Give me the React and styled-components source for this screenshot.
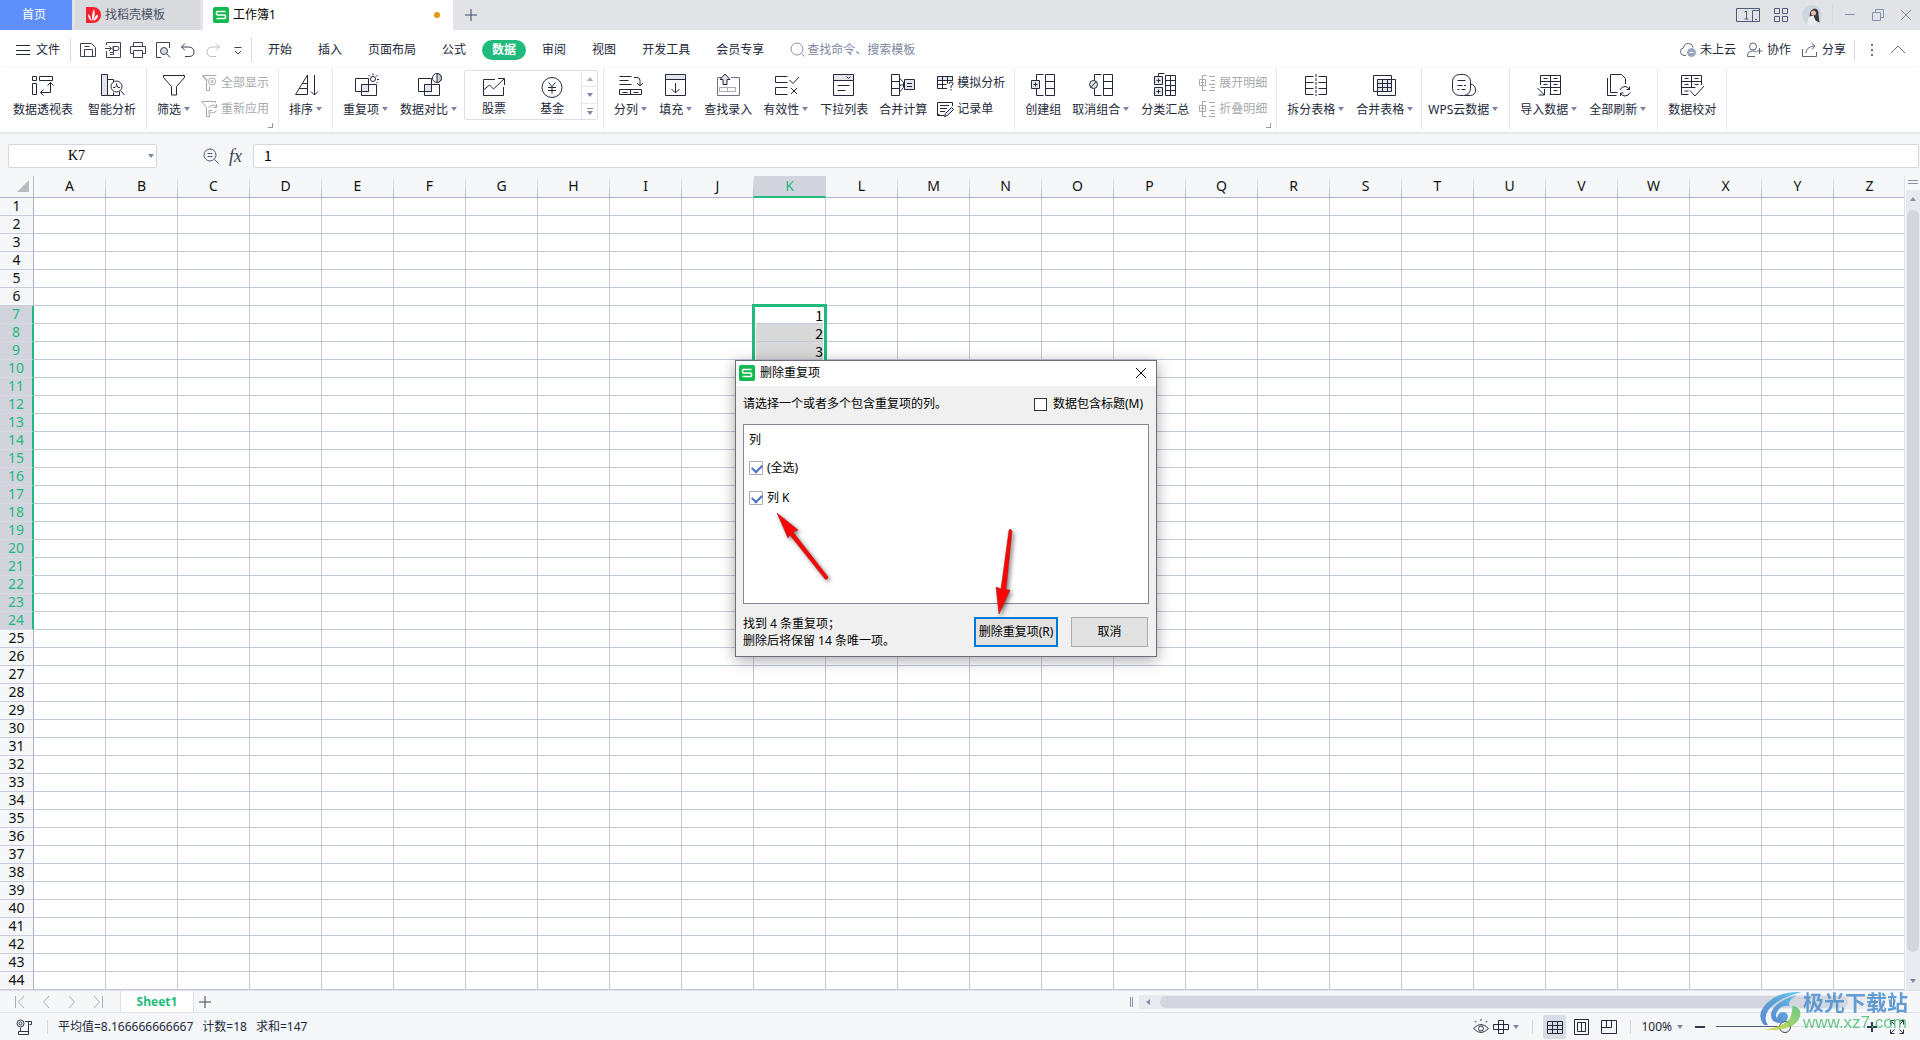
import React from "react";
import styled, { createGlobalStyle } from "styled-components";

const columns = "ABCDEFGHIJKLMNOPQRSTUVWXYZ".split("");
const rows = Array.from({ length: 44 }, (_, i) => i + 1);
const cells = { K7: 1, K8: 2, K9: 3 };
const selection = { column: "K", from: 7, to: 24 };

const menus = ["开始", "插入", "页面布局", "公式", "数据", "审阅", "视图", "开发工具", "会员专享"];

// ribbon groups, left to right
const ribbon = [
    {
        left: 7, right: 5, gap: 4,
        items: [
            { icon: "pivot", label: "数据透视表" },
            { icon: "smart", label: "智能分析" },
        ],
    },
    {
        corner: true,
        items: [
            { icon: "filter", label: "筛选", caret: true },
            {
                stack: [
                    { icon: "showAll", label: "全部显示", disabled: true },
                    { icon: "reapply", label: "重新应用", disabled: true },
                ],
            },
        ],
    },
    { items: [{ icon: "sort", label: "排序", caret: true }] },
    {
        items: [
            { icon: "duplicate", label: "重复项", caret: true },
            { icon: "compare", label: "数据对比", caret: true },
            { gallery: [{ icon: "stock", label: "股票" }, { icon: "fund", label: "基金" }] },
        ],
    },
    {
        items: [
            { icon: "split", label: "分列", caret: true },
            { icon: "fill", label: "填充", caret: true },
            { icon: "lookup", label: "查找录入" },
            { icon: "validity", label: "有效性", caret: true },
            { icon: "dropdown", label: "下拉列表" },
            { icon: "consolidate", label: "合并计算" },
            {
                stack: [
                    { icon: "whatIf", label: "模拟分析" },
                    { icon: "form", label: "记录单" },
                ],
            },
        ],
    },
    {
        corner: true,
        items: [
            { icon: "group", label: "创建组" },
            { icon: "ungroup", label: "取消组合", caret: true },
            { icon: "subtotal", label: "分类汇总" },
            {
                stack: [
                    { icon: "expand", label: "展开明细", disabled: true },
                    { icon: "collapse", label: "折叠明细", disabled: true },
                ],
            },
        ],
    },
    {
        right: 2,
        items: [
            { icon: "splitTable", label: "拆分表格", caret: true },
            { icon: "mergeTable", label: "合并表格", caret: true },
        ],
    },
    { left: 0, right: 5, items: [{ icon: "cloudData", label: "WPS云数据", caret: true }] },
    {
        right: 5,
        items: [
            { icon: "importData", label: "导入数据", caret: true },
            { icon: "refresh", label: "全部刷新", caret: true },
        ],
    },
    { right: 5, items: [{ icon: "proof", label: "数据校对" }] },
];

// 24px drawings
const bigIcons = {
    pivot: <><path d="M1.5 3.5h4v4h-4zM8.5 3.5h13v4h-13zM1.5 10.5h4v11h-4z" /><path d="M19.5 9.5v10h-10M16.5 12.5l3-3 3 3M12.5 16.5l-3 3 3 3" /></>,
    smart: <><path d="M1.5 1.5h6v21h-6z" fill="#e3e5ea" /><path d="M7.5 6.5h6v3M7.5 22.5h12v-4M13.5 22.5v-3" /><circle cx="16.5" cy="13.5" r="5.5" fill="#fff" /><path d="M20.5 17.5l4 4.5M13 14.5h2l2-2 1 2h2M16.5 10.5v2" /></>,
    filter: <path d="M1.5 2.5h21v2l-8 9v8.5h-5v-8.5l-8-9z" />,
    sort: <path d="M13.5 21.5V2l-12 19.5zM5.5 15.5h8M8.5 10.5h5M20.5 2v20M17 18.5l3.5 3.5 3.5-3.5" />,
    duplicate: <><path d="M1.5 5.5h13v13h-13z" /><path d="M7.5 11.5h15v11h-15z" /><path d="M7.5 11.5h7v7h-7z" fill="#e3e5ea" /><circle cx="19" cy="6" r="2.5" /><path d="M19 .5v2M14.5 2l1.5 1.5M23.500 2L22 3.500M25 6.500h-2M22.500 9l1 1" /></>,
    compare: <><path d="M1.5 5.5h13v13h-13z" /><path d="M7.5 11.5h15v11h-15z" /><path d="M7.5 11.5h7v7h-7z" fill="#e3e5ea" /><circle cx="20" cy="5" r="4.5" fill="#fff" /><path d="M20 .5a4.5 4.5 0 010 9z" fill="#c9ccd4" /></>,
    stock: <path d="M13 4.5H1.5v16h20V12M1.5 15l6-5 4 4 10.5-10M16 3.500h6.500V10" />,
    fund: <><circle cx="12" cy="12.5" r="10" /><path d="M8.5 7.5l3.5 4 3.5-4M12 11.500v7M8 12.500h8M8 15.500h8" /></>,
    split: <><path d="M.5 3.5h12M.5 7.5h9M.5 11.5h12M15 4.5h3q3 0 3 3v5M18 10l3 3 3-3" /><path d="M.5 16.5h22v5h-22zM11.5 16.5v5M3.5 19.5h5M14.5 19.5h5" /></>,
    fill: <><path d="M1.5 1.5h20v5h-20z" fill="#e3e5ea" /><path d="M1.5 6.5h20v16h-20zM11.5 10v9.5M7.5 16l4 4 4-4" /></>,
    lookup: <><path d="M6 4.5H1.5v18h22v-18H15" stroke="#6d7180" /><path d="M3.5 14.5h16v4h-16zM11.5 14.5v4" stroke="#a8abb5" /><path d="M9 1l5 5.5h-3v5H7v-5H4z" fill="#e3e5ea" /></>,
    validity: <path d="M13.5 3.5h-12v6h12M13.5 14.5h-12v7h12M15.5 7l3.5 3.5 6-6.5M17 15l6 6M23 15l-6 6" />,
    dropdown: <><path d="M1.5 1.5h20v6h-20z" fill="#e3e5ea" /><path d="M1.5 7.5h20v15h-20zM14.5 3.5l2 2 2-2M5.5 12.5h12M5.5 17.5h8" /></>,
    consolidate: <><path d="M.5 1.5h8v21h-8zM.5 8.5h8M.5 15.5h8M8.5 5l4 4.5v5l-4 4.5M9 12h4" /><path d="M13.5 6.5h10v10h-10z" fill="#e3e5ea" /><path d="M16 10.5h5M16 13.5h5" /></>,
    group: <><path d="M12.5 1.5h-7v21h7" /><path d="M.5 7.5h8v8h-8z" fill="#e3e5ea" /><path d="M4.5 9.5v4M2.5 11.5h4M14.5 1.5h9v21h-9zM14.5 8.5h9M14.5 15.5h9" /></>,
    ungroup: <><path d="M12.5 1.5h-7v21h7" /><circle cx="4.5" cy="11.5" r="4" fill="#e3e5ea" /><path d="M2 14.5l5-6M14.5 1.5h9v21h-9zM14.5 8.5h9M14.5 15.5h9" /></>,
    subtotal: <><path d="M5.5 3V.5h6M12.5 2.5h10v20h-10zM17.5 2.5v20M12.5 7.5h10M12.5 12.5h10M12.5 17.5h10" /><path d="M1.5 3.5h8v8h-8zM1.5 14.5h8v8h-8z" fill="#e3e5ea" /><path d="M5.5 5.5v4M3.5 7.5h4M5.5 16.5v4M3.5 18.5h4" /></>,
    splitTable: <><path d="M9.5 3.5h-8v18h8M1.5 9.5h8M1.5 15.5h8M14.5 3.5h8v18h-8M14.5 9.5h8M14.5 15.5h8" /><path d="M12 1v22" strokeDasharray="3 1" /></>,
    mergeTable: <><path d="M5 18.5H.5v-16h18V6" /><path d="M4.5 6.5h18v16h-18z" /><path d="M4.5 6.5h14v12h-14z" fill="#e3e5ea" /><path d="M4.5 10.5h14M4.5 14.5h14M9.5 6.5v12M14.5 6.5v12" /></>,
    cloudData: <><rect x=".5" y="1.5" width="18" height="21" rx="7" /><path d="M18.5 11q5 1 5 6 0 5-5 5.5h-6M5.5 7.5h8M5.5 12.5h5M12 12.5h2M5.5 16.5h2M9.5 16.5h4" /></>,
    importData: <path d="M3.5 12V2.5h20v19h-11M3.5 8.5h20M3.5 14.5h20M13.5 2.5v19M6.5 5.5h4M16.5 5.5h4M6.5 11.5h4M16.5 11.5h4M16.5 17.5h4M.5 15l7 7M7.5 16v6h-6" />,
    refresh: <><path d="M4.5 1.5h11l4 4V11M4.5 1.5v18h7" /><path d="M1.5 5v17.5h9M14 17q1.5-3.5 5-3.5 3 0 4.5 3M23.5 13.5v3h-3M24 19.5q-1.5 3.5-5 3.5-3 0-4.5-3M14.5 23v-3h3" /></>,
    proof: <path d="M8.5 21.5h-7v-19h20V12M1.5 8.5h20M1.5 14.5h14M11.5 2.5v12M4.5 5.5h4M14.5 5.5h4M4.5 11.5h4M14.5 11.5h4M4.5 18h4M10 17.5l5 5.5 9-10" />,
};

// 16px drawings
const smallIcons = {
    showAll: <><path d="M7 5.5L1.5.5h14M5.5 6v9.5h3V11" /><path d="M1.5 1l4 5" /><circle cx="11" cy="6.5" r="3.5" /><circle cx="11" cy="6.5" r="1" /></>,
    reapply: <><path d="M14.5 2V.5H.5l5 6v9h3V13" /><path d="M8 7q1-3 4-3 2 0 3.5 2M15.5 3v3.5h-3M15.5 9q-1 3-4 3-2 0-3-1.5M8 13V9.5h3" /></>,
    whatIf: <><path d="M.5 1.5h15v4H.5z" fill="#e3e5ea" /><path d="M10 13.5H.5v-12h15V6M.5 5.5h15M.5 9.5h9M5.5 1.5v12M10.5 1.5v7M12 9q0-2 2-2t2 2q0 1-2 2v2M14 14v1.5" /></>,
    form: <><path d="M15.5 5V1.5H.5v13h7M3 4.5h9M3 7.5h7M3 10.5h5M.5 13.5h2" /><path d="M14.5 6.5l2 2-6 6-3 1 1-3z" fill="#e3e5ea" /></>,
    expand: <path d="M7.5.5h-4v15h4M.5 4.5h6v6h-6zM3.5 6v3M2 7.5h3M10 1.5h6M12 5.5h4M10 9.5h6M12 12.5h4M10 15.5h6" />,
    collapse: <path d="M7.5.5h-4v15h4M.5 4.5h6v6h-6zM2 7.5h3M10 1.5h6M12 5.5h4M10 9.5h6M12 12.5h4M10 15.5h6" />,
    save: <path d="M.5 1.5h11l4 4v9H.5zM4.500 14.500v-7h8v7M4.500 4.500h5" />,
    pdf: <path d="M1.5 9v6.5h14V.5h-14V3M0 6.5h6M4 4l2.5 2.5L4 9M8 4.5h4q2 0 2 2t-2 2H8zM8.5 4.5v8H5M5 10.5h3" />,
    print: <path d="M3.5 4.5v-4h9v4M3.5 11.5h-3v-7h15v7h-3M3.5 8.5h9v7h-9z" />,
    preview: <><path d="M6 15.5H1.5V.5h13V6" /><circle cx="9" cy="9" r="3.5" fill="#d8dade" /><path d="M12 12l3 3.5" /></>,
    undo: <path d="M5 1.5L1.5 5 5 8.5M1.5 5H9q5 .5 5 5t-5 4.5H5" />,
    redo: <path d="M11 1.5L14.5 5 11 8.5M14.5 5H7q-5 .5-5 5t5 4.5h4" />,
    cloud: <><path d="M6 13.5H4Q.5 13 .5 9.5T3.5 6Q4 1.5 8.5 1.5q4 0 4.5 4" /><circle cx="11.5" cy="10.5" r="4" fill="#9aa5bd" stroke="#9aa5bd" /><path d="M9.5 10.5h4" stroke="#fff" /></>,
    people: <><circle cx="6" cy="4.5" r="3.5" /><path d="M8 14.5H.5q0-5.500 5-5.500 2 0 3.500 1M12.500 6v6M9.500 9h6" /></>,
    share: <path d="M.5 7v7.5h14V10M4 11q0-6 8-7M9.5 1L13 4l-3 3.5" />,
    eye: <><path d="M.5 9.5q7.5-8 15 0-7.5 8-15 0z" /><circle cx="8" cy="9.5" r="2.5" /><path d="M8 0v2M2 2l1 1.5M14 2l-1 1.5" /></>,
    cross: <path d="M5.5 1.5h5v13h-5zM.5 5.5h15v5H.5z" />,
    normal: <path d="M.5 2.5h15v12H.5zM.5 6.5h15M.5 10.5h15M5.5 2.5v12M10.5 2.5v12" />,
    page: <path d="M.5.5h14v15H.5zM3.5 3.5h8v9h-8zM7.5 3.5v9" />,
    pageBreak: <path d="M.5 1.5h15v13H.5zM5.5 1.5v7h5v-7M.5 8.500h5" />,
    macro: <><circle cx="4.5" cy="4.5" r="3.5" /><circle cx="4.5" cy="4.5" r="1.5" /><path d="M9 2.5h6.5v3h-2M12.5 2.5v13h-10v-3h10M4.500 9v3" /></>,
    full: <path d="M1.5 5.5v-4h4M1.5 1.5l4 4M10.5 1.5h4v4M14.5 1.5l-4 4M1.5 10.5v4h4M1.5 14.5l4-4M14.5 10.5v4h-4M14.5 14.5l-4-4" />,
    zoom: <><circle cx="7" cy="7" r="6" /><path d="M11.5 11.5l4 4M4.5 5.5h5M4.5 8.5h5" /></>,
    search: <><circle cx="7" cy="7" r="6" /><path d="M11.5 11.5l3 3" /></>,
    first: <path d="M3.5 2v12M12 2L6.5 8l5.5 6" />,
    prev: <path d="M11 2L5.5 8l5.5 6" />,
    next: <path d="M5 2l5.5 6L5 14" />,
    last: <path d="M12.5 2v12M4 2l5.5 6L4 14" />,
    apps: <path d="M1.5 1.5h5v5h-5zM9.5 1.5h5v5h-5zM1.5 9.5h5v5h-5zM9.5 9.5h5v5h-5z" />,
    min: <path d="M3 7.5h10" />,
    restore: <path d="M2.5 5.5h8v8h-8zM5.5 5.5v-3h8v8h-3" />,
    close: <path d="M3 3l10 10M13 3L3 13" />,
    plus: <path d="M8 2v12M2 8h12" />,
    up: <path d="M1 11l7-7 7 7" />,
    menu: <path d="M1 3.5h14M1 8.5h14M1 12.5h14" />,
    more: <path d="M4.5 5.5h7M5 9l3 3 3-3" />,
};

const Icon = ({ name, size = 16 }) => (
    <svg width={size} height={size} viewBox={`0 0 ${size} ${size}`} fill="none" stroke="currentColor" overflow="visible" aria-hidden="true">
        {size === 24 ? bigIcons[name] : smallIcons[name]}
    </svg>
);

const Caret = () => (
    <svg width="6" height="4" viewBox="0 0 6 4" fill="#7a86a1" aria-hidden="true">
        <path d="M0 0h6L3 4z" />
    </svg>
);

const SheetLogo = () => (
    <svg width="16" height="16" viewBox="0 0 16 16" aria-hidden="true">
        <rect width="16" height="16" rx="2" fill="#12b94c" />
        <path d="M12.5 4.5h-8q-1 0-1 1v1.500q0 1 1 1h7q1 0 1 1v1.500q0 1-1 1h-8" fill="none" stroke="#fff" strokeWidth="1.6" />
    </svg>
);

const TitleBar = () => (
    <TitleRow>
        <HomeTab type="button">首页</HomeTab>
        <DocTab type="button" $width={125}>
            <svg width="16" height="16" viewBox="0 0 16 16" aria-hidden="true">
                <path d="M1 0h7a8 8 0 010 16H1z" fill="#f5222d" />
                <path d="M7.500 14Q6 8 9 2q2 6-1.500 12zM6.500 14Q3 12 3 7q3 2 3.500 7zM8.500 14Q9 9 13 7.500 13 12 8.500 14z" fill="#fff" />
            </svg>
            找稻壳模板
        </DocTab>
        <DocTab type="button" $width={250} $active>
            <SheetLogo />
            工作簿1
            <UnsavedDot />
        </DocTab>
        <IconButton type="button" aria-label="新建" $width={36} $color="#3f4a66"><Icon name="plus" /></IconButton>
        <Spacer />
        <WindowTools>
            <svg width="24" height="16" viewBox="0 0 24 16" fill="none" stroke="#4f5b77" aria-hidden="true">
                <path d="M.5 1.500h23v13H.5zM16.500 14.500v-11h7M8.500 5l2-1v8M8.500 12h4M19 12.500h2" />
            </svg>
            <Icon name="apps" />
            <svg width="20" height="20" viewBox="0 0 20 20" aria-hidden="true">
                <circle cx="10" cy="10" r="10" fill="#cbd9de" />
                <path d="M5 20l2-9 5-1 3 9q-5 2-10 1z" fill="#e8edf0" />
                <path d="M8 8Q9 4 13 3.500q4 1 3.500 6l1 8-4-2-2-5-4 1z" fill="#42343c" />
                <circle cx="11.500" cy="8" r="2.500" fill="#e4beb2" />
            </svg>
        </WindowTools>
        <Divider $height={20} />
        <WindowButtons>
            <IconButton type="button" aria-label="最小化" $width={28} $color="#8492b0"><Icon name="min" /></IconButton>
            <IconButton type="button" aria-label="还原" $width={28} $color="#8492b0"><Icon name="restore" /></IconButton>
            <IconButton type="button" aria-label="关闭" $width={28} $color="#8492b0"><Icon name="close" /></IconButton>
        </WindowButtons>
    </TitleRow>
);

const MenuBar = () => (
    <MenuRow>
        <FileButton type="button"><Icon name="menu" />文件</FileButton>
        <Divider $height={24} />
        <QuickTools>
            {["save", "pdf", "print", "preview", "undo", "redo", "more"].map((name) => (
                <IconButton type="button" key={name} aria-label={name} $width={25} $color={name === "redo" ? "#b9bdc6" : "#3c4254"}>
                    <Icon name={name} />
                </IconButton>
            ))}
        </QuickTools>
        <Divider $height={24} />
        <Menus>
            {menus.map((menu) => (
                <MenuItem type="button" key={menu} $active={menu === "数据"}>{menu}</MenuItem>
            ))}
        </Menus>
        <SearchBox>
            <Icon name="search" />
            <input type="text" aria-label="查找" placeholder="查找命令、搜索模板" />
        </SearchBox>
        <Spacer />
        <CloudTools>
            <ToolButton type="button"><Icon name="cloud" />未上云</ToolButton>
            <ToolButton type="button"><Icon name="people" />协作</ToolButton>
            <ToolButton type="button"><Icon name="share" />分享</ToolButton>
        </CloudTools>
        <Divider $height={20} />
        <IconButton type="button" aria-label="更多" $width={34} $color="#6d7180">
            <svg width="4" height="14" viewBox="0 0 4 14" fill="currentColor" aria-hidden="true">
                <path d="M1 1h2v2H1zM1 6h2v2H1zM1 11h2v2H1z" />
            </svg>
        </IconButton>
        <IconButton type="button" aria-label="收起功能区" $width={18} $color="#6d7180"><Icon name="up" /></IconButton>
    </MenuRow>
);

const RibbonItem = ({ item }) => {
    if (item.stack) {
        return (
            <Stack>
                {item.stack.map((sub) => (
                    <SmallButton type="button" key={sub.label} disabled={sub.disabled}>
                        <Icon name={sub.icon} />
                        {sub.label}
                    </SmallButton>
                ))}
            </Stack>
        );
    }
    if (item.gallery) {
        return (
            <Gallery>
                {item.gallery.map((sub) => (
                    <GalleryButton type="button" key={sub.label}>
                        <Icon name={sub.icon} size={24} />
                        <span>{sub.label}</span>
                    </GalleryButton>
                ))}
                <GalleryScroll>
                    <button type="button" aria-label="上一行">
                        <svg width="6" height="4" viewBox="0 0 6 4" fill="#a3abbd"><path d="M0 4h6L3 0z" /></svg>
                    </button>
                    <button type="button" aria-label="下一行"><Caret /></button>
                    <button type="button" aria-label="展开">
                        <svg width="6" height="7" viewBox="0 0 6 7" fill="#7a86a1"><path d="M0 0h6v1H0zM0 3h6L3 7z" /></svg>
                    </button>
                </GalleryScroll>
            </Gallery>
        );
    }
    return (
        <BigButton type="button">
            <Icon name={item.icon} size={24} />
            <BigLabel>
                {item.label}
                {item.caret && <Caret />}
            </BigLabel>
        </BigButton>
    );
};

const Ribbon = () => (
    <RibbonRow>
        {ribbon.map((group, idx) => (
            <Group key={idx} $left={group.left} $right={group.right} $gap={group.gap}>
                {group.items.map((item, i) => <RibbonItem item={item} key={i} />)}
                {group.corner && <Corner />}
            </Group>
        ))}
    </RibbonRow>
);

const FormulaBar = () => (
    <FormulaRow>
        <NameBox>
            <input type="text" aria-label="名称框" defaultValue="K7" />
            <button type="button" aria-label="名称列表"><Caret /></button>
        </NameBox>
        <FormulaTools>
            <IconButton type="button" aria-label="查找单元格" $width={18} $color="#4f5b77"><Icon name="zoom" /></IconButton>
            <FxButton type="button">fx</FxButton>
        </FormulaTools>
        <FormulaInput type="text" aria-label="编辑栏" defaultValue="1" />
    </FormulaRow>
);

const Sheet = () => {
    const inSelection = (row) => row >= selection.from && row <= selection.to;
    return (
        <SheetArea>
            <GridWrap>
                <Grid>
                    <colgroup>
                        <RowHeadCol />
                        {columns.map((col) => <DataCol key={col} />)}
                    </colgroup>
                    <thead>
                        <tr>
                            <CornerCell aria-label="全选">
                                <svg width="12" height="12" viewBox="0 0 12 12" fill="#b9bcc2" aria-hidden="true"><path d="M12 0v12H0z" /></svg>
                            </CornerCell>
                            {columns.map((col) => (
                                <ColHead scope="col" key={col} $active={col === selection.column}>{col}</ColHead>
                            ))}
                        </tr>
                    </thead>
                    <tbody>
                        {rows.map((row) => (
                            <tr key={row}>
                                <RowHead scope="row" $active={inSelection(row)}>{row}</RowHead>
                                {columns.map((col) => {
                                    const selected = col === selection.column && inSelection(row);
                                    const first = selected && row === selection.from;
                                    return (
                                        <Cell key={col} $selected={selected && !first}>
                                            {cells[col + row]}
                                            {first && <SelectionFrame $rows={selection.to - selection.from + 1} />}
                                        </Cell>
                                    );
                                })}
                            </tr>
                        ))}
                    </tbody>
                </Grid>
            </GridWrap>
            <VerticalBar>
                <SplitHandle />
                <VerticalTrack>
                    <svg width="6" height="4" viewBox="0 0 6 4" fill="#8492b0" aria-hidden="true"><path d="M0 4h6L3 0z" /></svg>
                    <VerticalThumb />
                    <Caret />
                </VerticalTrack>
            </VerticalBar>
        </SheetArea>
    );
};

const SheetTabs = () => (
    <TabsRow>
        <TabNav>
            <IconButton type="button" aria-label="第一个" $width={26} $color="#a9adb8"><Icon name="first" /></IconButton>
            <IconButton type="button" aria-label="上一个" $width={26} $color="#a9adb8"><Icon name="prev" /></IconButton>
            <IconButton type="button" aria-label="下一个" $width={26} $color="#a9adb8"><Icon name="next" /></IconButton>
            <IconButton type="button" aria-label="最后一个" $width={26} $color="#a9adb8"><Icon name="last" /></IconButton>
        </TabNav>
        <SheetTab type="button">Sheet1</SheetTab>
        <IconButton type="button" aria-label="新建工作表" $width={22} $color="#3c4254"><Icon name="plus" /></IconButton>
        <Spacer />
        <BarGrip />
        <HorizontalTrack>
            <svg width="4" height="6" viewBox="0 0 4 6" fill="#8492b0" aria-hidden="true"><path d="M4 0v6L0 3z" /></svg>
            <HorizontalThumb />
            <svg width="4" height="6" viewBox="0 0 4 6" fill="#8492b0" aria-hidden="true"><path d="M0 0v6l4-3z" /></svg>
        </HorizontalTrack>
        <BarGrip />
    </TabsRow>
);

const StatusBar = () => (
    <StatusRow>
        <IconButton type="button" aria-label="宏" $width={47} $color="#2f3649"><Icon name="macro" /></IconButton>
        <Divider $height={14} />
        <Summary>
            <span>平均值=8.166666666667</span>
            <span>计数=18</span>
            <span>求和=147</span>
        </Summary>
        <Spacer />
        <IconButton type="button" aria-label="护眼模式" $width={24} $color="#2f3649"><Icon name="eye" /></IconButton>
        <DropButton type="button" aria-label="阅读模式"><Icon name="cross" /><Caret /></DropButton>
        <Divider $height={14} />
        <Views>
            <ViewButton type="button" aria-label="普通视图" $active><Icon name="normal" /></ViewButton>
            <ViewButton type="button" aria-label="页面视图"><Icon name="page" /></ViewButton>
            <ViewButton type="button" aria-label="分页预览"><Icon name="pageBreak" /></ViewButton>
        </Views>
        <Divider $height={14} />
        <ZoomButton type="button">100%<Caret /></ZoomButton>
        <ZoomStep type="button" aria-label="缩小">
            <svg width="10" height="10" viewBox="0 0 10 10" aria-hidden="true"><path d="M0 4h10v2H0z" fill="currentColor" /></svg>
        </ZoomStep>
        <ZoomSlider type="range" aria-label="缩放" min="0" max="100" defaultValue="46" />
        <ZoomStep type="button" aria-label="放大">
            <svg width="10" height="10" viewBox="0 0 10 10" aria-hidden="true"><path d="M0 4h4V0h2v4h4v2H6v4H4V6H0z" fill="currentColor" /></svg>
        </ZoomStep>
        <IconButton type="button" aria-label="全屏" $width={18} $color="#2f3649"><Icon name="full" /></IconButton>
    </StatusRow>
);

const RemoveDialog = () => (
    <Dialog role="dialog" aria-label="删除重复项">
        <DialogTitle>
            <SheetLogo />
            <span>删除重复项</span>
            <IconButton type="button" aria-label="关闭" $width={42} $color="#000"><Icon name="close" /></IconButton>
        </DialogTitle>
        <DialogHint>
            <span>请选择一个或者多个包含重复项的列。</span>
            <HeaderCheck>
                <input type="checkbox" />
                数据包含标题(M)
            </HeaderCheck>
        </DialogHint>
        <ColumnList>
            <ListHead>列</ListHead>
            <ColumnCheck>
                <input type="checkbox" defaultChecked />
                (全选)
            </ColumnCheck>
            <ColumnCheck>
                <input type="checkbox" defaultChecked />
                列 K
            </ColumnCheck>
        </ColumnList>
        <DialogFooter>
            <Found>
                找到 4 条重复项；<br />
                删除后将保留 14 条唯一项。
            </Found>
            <DialogButton type="button" $width={84} $primary>删除重复项(R)</DialogButton>
            <DialogButton type="button" $width={77}>取消</DialogButton>
        </DialogFooter>
        <Arrows viewBox="0 0 422 297" aria-hidden="true">
            <path d="M41 152l21 17-5 2 35 45q0 3-3 2L54 174l-2 3z" />
            <path d="M263 253l-3-27 5 2 8-59q2-2 3 1l-6 59 4 0z" />
        </Arrows>
    </Dialog>
);

const SiteMark = () => (
    <Mark>
        <svg width="44" height="42" viewBox="0 0 44 42" aria-hidden="true">
            <defs>
                <linearGradient id="markBlue" x1="0" y1="1" x2="1" y2="0">
                    <stop offset="0" stopColor="#3f74c4" />
                    <stop offset="1" stopColor="#4fc0ee" />
                </linearGradient>
                <linearGradient id="markGreen" x1="0" y1="1" x2="1" y2="0">
                    <stop offset="0" stopColor="#d9dc3a" />
                    <stop offset="1" stopColor="#4fbf74" />
                </linearGradient>
            </defs>
            <path d="M43 1Q20 0 8 12-3 23 4 33q2 2 5 1-6-8 3-18Q22 6 43 1z" fill="url(#markBlue)" />
            <path d="M31 6Q12 14 12 24q0 7 8 8 8 0 9-6 0-5-6-5-4 1-5 6-3-3 2-9 4-4 11-3Q27 11 38 4z" fill="url(#markBlue)" />
            <path d="M33 15q10 1 8 10-3 12-24 14l-14 0q22-3 28-12 3-7 2-12z" fill="url(#markGreen)" />
        </svg>
        <div>
            <MarkName>极光下载站</MarkName>
            <MarkSite>www.xz7.com</MarkSite>
        </div>
    </Mark>
);

const App = () => {
    return (
        <Page>
            <GlobalStyle />
            <TitleBar />
            <MenuBar />
            <Ribbon />
            <FormulaBar />
            <Sheet />
            <SheetTabs />
            <StatusBar />
            <RemoveDialog />
            <SiteMark />
        </Page>
    );
};

const GlobalStyle = createGlobalStyle`
* { box-sizing: border-box; }
body {
    margin: 0;
    font-family: "Noto Sans", "Noto Sans CJK SC", sans-serif;
    font-size: 12px;
    line-height: 18px;
    color: #23283a;
}
button, input {
    margin: 0;
    padding: 0;
    border: 0;
    background: none;
    font: inherit;
    color: inherit;
    white-space: nowrap;
}
svg { flex: none; display: block; }
p { margin: 0; }
`;

const Page = styled.div`
position: relative;
display: flex;
flex-direction: column;
height: 100vh;
overflow: hidden;
background-color: #f5f7f9;
`;

const Spacer = styled.div`
flex: 1;
`;

const Divider = styled.div`
width: 1px;
height: ${(props) => props.$height}px;
background-color: #d5d8de;
`;

const IconButton = styled.button`
display: flex;
align-items: center;
justify-content: center;
width: ${(props) => props.$width}px;
height: 20px;
color: ${(props) => props.$color};
`;

const TitleRow = styled.header`
flex: none;
display: flex;
align-items: center;
height: 30px;
background-color: #e2e3e7;
`;

const HomeTab = styled.button`
width: 72px;
height: 30px;
margin-right: 3px;
padding-right: 4px;
background-color: #5f8ffa;
color: white;
`;

const DocTab = styled.button`
display: flex;
align-items: center;
gap: 4px;
width: ${(props) => props.$width}px;
height: 30px;
margin-right: ${(props) => (props.$active ? 0 : 3)}px;
padding: 0 13px 0 10px;
background-color: ${(props) => (props.$active ? "white" : "#d8dade")};
color: ${(props) => (props.$active ? "#000" : "#4a5164")};
`;

const UnsavedDot = styled.span`
width: 6px;
height: 6px;
margin-left: auto;
border-radius: 50%;
background-color: #e59a0c;
`;

const WindowTools = styled.div`
display: flex;
align-items: center;
gap: 13px;
margin-right: 10px;
color: #4f5b77;
`;

const WindowButtons = styled.div`
display: flex;
padding-left: 3px;
`;

const MenuRow = styled.nav`
flex: none;
display: flex;
align-items: center;
height: 38px;
padding: 1px 13px 0 15px;
background-color: white;
`;

const FileButton = styled.button`
display: flex;
align-items: center;
gap: 5px;
margin-right: 10px;
`;

const QuickTools = styled.div`
display: flex;
padding: 0 1px 0 4px;
`;

const Menus = styled.div`
display: flex;
padding: 0 13px 0 3px;
`;

const MenuItem = styled.button`
height: 20px;
margin: 0 3px;
padding: 0 10px;
border-radius: 10px;
line-height: 20px;
${(props) => props.$active && `
background-color: #1fba7c;
color: white;
font-weight: 700;
`}
`;

const SearchBox = styled.label`
display: flex;
align-items: center;
gap: 1px;
color: #8a93a8;
input {
    width: 140px;
    outline: none;
}
input::placeholder {
    color: #7d87a0;
    opacity: 1;
}
`;

const CloudTools = styled.div`
display: flex;
gap: 11px;
margin-right: 8px;
`;

const ToolButton = styled.button`
display: flex;
align-items: center;
gap: 4px;
svg { color: #5c6479; }
`;

const RibbonRow = styled.div`
flex: none;
display: flex;
height: 64px;
padding-bottom: 2px;
background-color: white;
box-shadow: 0 1px 3px rgba(0, 0, 0, 0.12);
z-index: 1;
`;

const Group = styled.div`
position: relative;
display: flex;
gap: ${(props) => props.$gap ?? 0}px;
padding: 0 ${(props) => props.$right ?? 4}px 0 ${(props) => props.$left ?? 4}px;
border-right: 1px solid #e6e8ec;
`;

const BigButton = styled.button`
display: flex;
flex-direction: column;
align-items: center;
gap: 4px;
padding: 5px 5px 0 6px;
`;

const BigLabel = styled.span`
display: flex;
align-items: center;
svg { margin: 0 1px 2px 3px; }
`;

const Stack = styled.div`
display: flex;
flex-direction: column;
gap: 8px;
padding: 6px 5px 0;
`;

const SmallButton = styled.button`
display: flex;
align-items: center;
gap: 4px;
height: 18px;
color: ${(props) => (props.disabled ? "#a8a9ad" : "inherit")};
`;

const Corner = styled.span`
position: absolute;
right: 5px;
bottom: 2px;
width: 5px;
height: 5px;
border: solid #8f97a8;
border-width: 0 1px 1px 0;
`;

const Gallery = styled.div`
display: flex;
width: 134px;
height: 50px;
margin: 2px 1px 0;
border: 1px solid #dcdfe5;
border-radius: 2px;
`;

const GalleryButton = styled.button`
flex: 1;
display: flex;
flex-direction: column;
align-items: center;
gap: 1px;
padding-top: 4px;
`;

const GalleryScroll = styled.div`
display: flex;
flex-direction: column;
width: 16px;
border-left: 1px solid #e6e8ec;
button {
    flex: 1;
    display: flex;
    align-items: center;
    justify-content: center;
}
button + button {
    border-top: 1px solid #e6e8ec;
}
`;

const FormulaRow = styled.div`
flex: none;
display: flex;
align-items: flex-start;
height: 44px;
padding: 12px 1px 0 8px;
`;

const NameBox = styled.div`
display: flex;
width: 149px;
height: 24px;
border: 1px solid #d5d8de;
border-radius: 2px;
background-color: white;
input {
    flex: 1;
    min-width: 0;
    padding-right: 2px;
    font-family: "Liberation Serif", serif;
    font-size: 14px;
    text-align: center;
    color: #000;
}
button {
    display: flex;
    align-items: center;
    justify-content: center;
    width: 10px;
}
`;

const FormulaTools = styled.div`
display: flex;
align-items: center;
gap: 9px;
width: 96px;
height: 24px;
padding-left: 45px;
`;

const FxButton = styled.button`
font-family: "Liberation Serif", serif;
font-size: 18px;
font-style: italic;
color: #3c4254;
`;

const FormulaInput = styled.input`
flex: 1;
min-width: 0;
height: 24px;
padding: 0 10px 2px;
border: 1px solid #d5d8de;
border-radius: 2px;
background-color: white;
font-family: "Noto Sans CJK SC", sans-serif;
font-size: 14px;
color: #000;
`;

const SheetArea = styled.main`
flex: 1;
min-height: 0;
display: flex;
`;

const GridWrap = styled.div`
flex: 1;
min-width: 0;
overflow: hidden;
border-right: 1px solid #dfe2e8;
`;

const Grid = styled.table`
width: 1906px;
table-layout: fixed;
border-collapse: separate;
border-spacing: 0;
background-color: white;
font-size: 14px;
line-height: 15px;
`;

const RowHeadCol = styled.col`
width: 34px;
`;

const DataCol = styled.col`
width: 72px;
`;

const HeadCell = styled.th`
padding: 0 0 2px;
background-color: #f5f7f9;
font-weight: 400;
color: #111;
`;

const CornerCell = styled(HeadCell)`
height: 22px;
border-right: 1px solid #b4bbcd;
border-bottom: 1px solid #a9b2c8;
svg { margin-left: 17px; }
`;

const ColHead = styled(HeadCell)`
height: 22px;
border-right: 1px solid;
border-image: linear-gradient(#f5f7f9, #a9b2c8) 1;
border-bottom: 1px solid #a9b2c8;
${(props) => props.$active && `
background-color: #d1d4dc;
border-image: none;
border-right-color: #d1d4dc;
border-bottom: 2px solid #1fba7c;
color: #1fba7c;
`}
`;

const RowHead = styled(HeadCell)`
height: 18px;
border-right: 1px solid #a9b2c8;
border-bottom: 1px solid #c8cdd9;
${(props) => props.$active && `
background-color: #d1d4dc;
border-right: 2px solid #1fba7c;
border-bottom-color: #d8dbe2;
color: #1fba7c;
`}
`;

const Cell = styled.td`
position: relative;
height: 18px;
padding: 2px 2px 0 0;
border-right: 1px solid #c3c8d6;
border-bottom: 1px solid #c3c8d6;
background-color: ${(props) => (props.$selected ? "#d9d9d9" : "white")};
font-family: "Noto Sans CJK SC", sans-serif;
text-align: right;
color: #000;
`;

const SelectionFrame = styled.span`
position: absolute;
z-index: 1;
top: -2px;
left: -2px;
width: 75px;
height: ${(props) => props.$rows * 18 + 4}px;
border: 3px solid #1fba7c;
box-shadow: inset 0 0 0 1px white;
`;

const VerticalBar = styled.div`
display: flex;
flex-direction: column;
width: 15px;
padding-left: 1px;
`;

const SplitHandle = styled.div`
height: 4px;
margin: 4px 2px 6px;
border: solid #8492b0;
border-width: 1px 0;
`;

const VerticalTrack = styled.div`
flex: 1;
display: flex;
flex-direction: column;
align-items: center;
gap: 9px;
padding: 7px 0;
background-color: #e9eaef;
`;

const VerticalThumb = styled.div`
flex: 1;
width: 12px;
margin-bottom: 18px;
border-radius: 6px;
background-color: #d3d6de;
`;

const TabsRow = styled.div`
flex: none;
display: flex;
align-items: center;
height: 23px;
padding-right: 20px;
border-top: 1px solid #dcdfe5;
border-bottom: 1px solid #dfe2ea;
background-color: #f5f7f9;
`;

const TabNav = styled.div`
display: flex;
width: 120px;
padding-left: 7px;
`;

const SheetTab = styled.button`
width: 74px;
height: 21px;
border-right: 1px solid #dcdfe5;
border-left: 1px solid #dcdfe5;
background-color: white;
font-weight: 700;
color: #1fba7c;
`;

const BarGrip = styled.div`
width: 3px;
height: 10px;
margin: 0 6px;
border: solid #8492b0;
border-width: 0 1px;
`;

const HorizontalTrack = styled.div`
display: flex;
align-items: center;
gap: 10px;
width: calc(40% - 14px);
height: 14px;
padding: 0 7px;
background-color: #e9eaef;
`;

const HorizontalThumb = styled.div`
flex: 1;
height: 12px;
margin-right: 16px;
border-radius: 6px;
background-color: #d3d6de;
`;

const StatusRow = styled.footer`
flex: none;
display: flex;
align-items: center;
height: 27px;
padding-right: 14px;
background-color: #f5f7f9;
`;

const Summary = styled.div`
display: flex;
gap: 9px;
padding-left: 10px;
`;

const DropButton = styled.button`
display: flex;
align-items: center;
gap: 4px;
margin-right: 13px;
`;

const Views = styled.div`
display: flex;
gap: 4px;
padding: 0 10px;
`;

const ViewButton = styled.button`
display: flex;
align-items: center;
justify-content: center;
width: 23px;
height: 24px;
border-radius: 2px;
background-color: ${(props) => (props.$active ? "#d8dde5" : "transparent")};
`;

const ZoomButton = styled.button`
display: flex;
align-items: center;
gap: 5px;
padding: 0 12px 0 10px;
`;

const ZoomStep = styled.button`
color: #2f3649;
`;

const ZoomSlider = styled.input`
appearance: none;
width: 149px;
height: 12px;
margin: 0 2px 0 11px;
background: linear-gradient(to right, #4f5b77 46%, #dadde6 46%) center / 100% 1px no-repeat;
&::-webkit-slider-thumb {
    appearance: none;
    width: 12px;
    height: 12px;
    border: 1px solid #3c4254;
    border-radius: 50%;
    background-color: #f5f7f9;
}
& + button {
    margin-right: 11px;
}
`;

const Dialog = styled.section`
position: absolute;
z-index: 2;
top: 360px;
left: calc(50% - 225px);
width: 422px;
border: 1px solid #6b7076;
background-color: #f0f0f0;
box-shadow: 0 3px 14px rgba(0, 0, 0, 0.35);
color: #000;
`;

const DialogTitle = styled.div`
display: flex;
align-items: center;
gap: 5px;
height: 25px;
padding: 0 0 1px 3px;
background-color: white;
button { margin: 0 -6px 0 auto; }
`;

const DialogHint = styled.div`
display: flex;
align-items: center;
justify-content: space-between;
height: 38px;
padding: 0 13px 2px 7px;
`;

const HeaderCheck = styled.label`
display: flex;
align-items: center;
gap: 6px;
input {
    appearance: none;
    width: 13px;
    height: 13px;
    border: 1px solid #333;
    background-color: white;
}
`;

const ColumnList = styled.div`
height: 180px;
margin: 0 7px;
padding: 4px 5px;
border: 1px solid #828790;
background-color: white;
`;

const ListHead = styled.p`
height: 24px;
line-height: 22px;
`;

const ColumnCheck = styled.label`
display: flex;
align-items: center;
gap: 4px;
height: 30px;
input {
    appearance: none;
    position: relative;
    width: 14px;
    height: 14px;
    border: 1px solid #a9abb0;
    border-radius: 1px;
    background-color: white;
}
input:checked::after {
    content: "";
    position: absolute;
    top: 2px;
    left: 2px;
    width: 8px;
    height: 5px;
    border: solid #4472c4;
    border-width: 0 0 2px 2px;
    transform: rotate(-45deg);
}
`;

const DialogFooter = styled.div`
display: flex;
align-items: center;
gap: 13px;
height: 52px;
padding: 3px 8px 0 7px;
`;

const Found = styled.p`
flex: 1;
line-height: 17px;
`;

const DialogButton = styled.button`
width: ${(props) => props.$width}px;
height: 30px;
border: ${(props) => (props.$primary ? "2px solid #0078d7" : "1px solid #adadad")};
background-color: #e1e1e1;
`;

const Arrows = styled.svg`
position: absolute;
top: 0;
left: 0;
width: 422px;
height: 297px;
fill: #fb0505;
stroke: #a31515;
stroke-width: 0.5;
filter: drop-shadow(2px 2px 2px rgba(0, 0, 0, 0.5));
pointer-events: none;
`;

const Mark = styled.div`
position: absolute;
z-index: 2;
right: 12px;
bottom: 7px;
display: flex;
align-items: center;
opacity: 0.85;
pointer-events: none;
`;

const MarkName = styled.div`
font-size: 21px;
font-weight: 700;
line-height: 22px;
color: #4a8fd0;
`;

const MarkSite = styled.div`
font-family: "Liberation Sans", sans-serif;
font-size: 17px;
line-height: 20px;
color: #4fbf74;
`;

export default App;
